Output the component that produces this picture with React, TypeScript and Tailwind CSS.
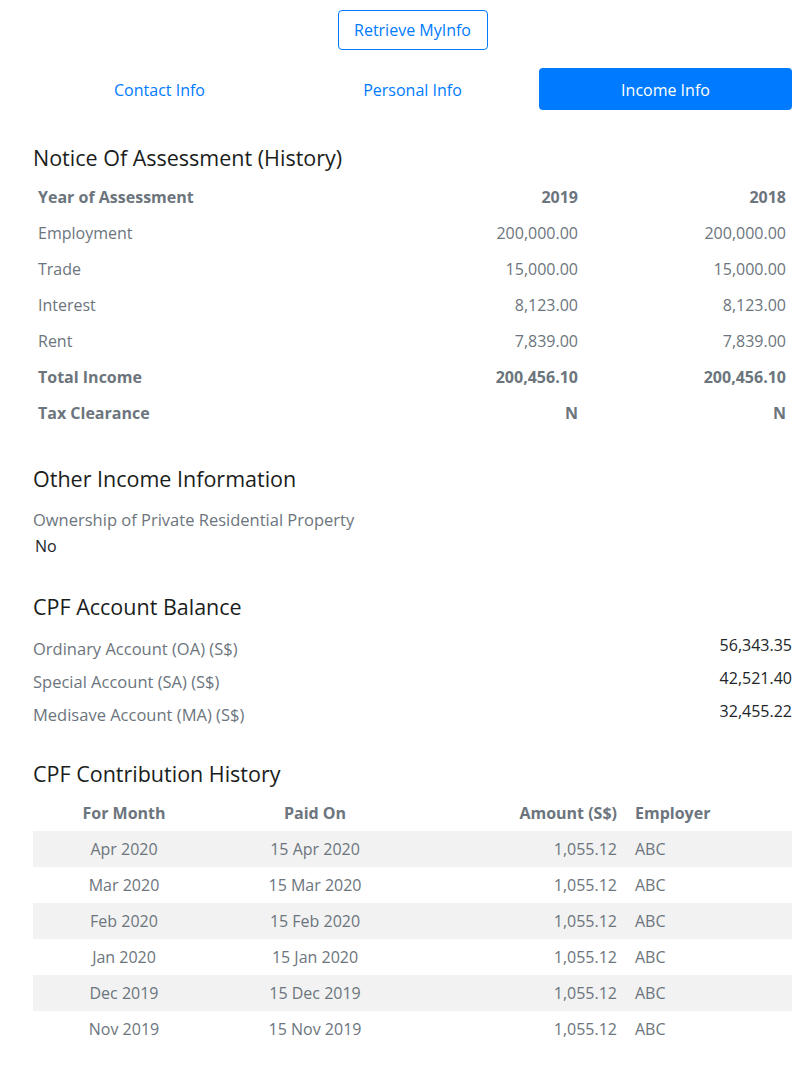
import React from "react";

const noa = [
  { label: "Employment", y2019: "200,000.00", y2018: "200,000.00" },
  { label: "Trade", y2019: "15,000.00", y2018: "15,000.00" },
  { label: "Interest", y2019: "8,123.00", y2018: "8,123.00" },
  { label: "Rent", y2019: "7,839.00", y2018: "7,839.00" },
];

const balances = [
  { label: "Ordinary Account (OA) (S$)", value: "56,343.35" },
  { label: "Special Account (SA) (S$)", value: "42,521.40" },
  { label: "Medisave Account (MA) (S$)", value: "32,455.22" },
];

const contributions = [
  { month: "Apr 2020", paid: "15 Apr 2020" },
  { month: "Mar 2020", paid: "15 Mar 2020" },
  { month: "Feb 2020", paid: "15 Feb 2020" },
  { month: "Jan 2020", paid: "15 Jan 2020" },
  { month: "Dec 2019", paid: "15 Dec 2019" },
  { month: "Nov 2019", paid: "15 Nov 2019" },
];

export default function App() {
  return (
    <div className="bg-white font-['Open_Sans',_'Noto_Sans',_sans-serif] text-[16px] text-[#212529]">
      <div className="pl-[33px] pr-[18px] pt-[10px] pb-[20px]">
        {/* Retrieve button */}
        <div className="flex justify-center">
          <button className="h-[40px] w-[150px] rounded-[4px] border border-[#007bff] text-[16px] text-[#007bff]">
            Retrieve MyInfo
          </button>
        </div>

        {/* Tabs */}
        <div className="mt-[18px] grid grid-cols-3">
          <div className="flex h-[42px] items-center justify-center pt-[2px] text-[#007bff]">Contact Info</div>
          <div className="flex h-[42px] items-center justify-center pt-[2px] text-[#007bff]">Personal Info</div>
          <div className="flex h-[42px] items-center justify-center rounded-[4px] bg-[#007bff] pt-[2px] text-white">
            Income Info
          </div>
        </div>

        {/* Notice of Assessment */}
        <h5 className="mt-[33px] text-[21.5px] leading-[30px] text-[#1a1d20]">Notice Of Assessment (History)</h5>
        <div className="mt-[6px] text-[#6c757d]">
          <div className="grid h-[36px] grid-cols-[1fr_208px_208px] items-center font-bold">
            <div className="pl-[5px]">Year of Assessment</div>
            <div className="pr-[6px] text-right">2019</div>
            <div className="pr-[6px] text-right">2018</div>
          </div>
          {noa.map((r) => (
            <div key={r.label} className="grid h-[36px] grid-cols-[1fr_208px_208px] items-center">
              <div className="pl-[5px]">{r.label}</div>
              <div className="pr-[6px] text-right">{r.y2019}</div>
              <div className="pr-[6px] text-right">{r.y2018}</div>
            </div>
          ))}
          <div className="grid h-[36px] grid-cols-[1fr_208px_208px] items-center font-bold">
            <div className="pl-[5px]">Total Income</div>
            <div className="pr-[6px] text-right">200,456.10</div>
            <div className="pr-[6px] text-right">200,456.10</div>
          </div>
          <div className="grid h-[36px] grid-cols-[1fr_208px_208px] items-center font-bold">
            <div className="pl-[5px]">Tax Clearance</div>
            <div className="pr-[6px] text-right">N</div>
            <div className="pr-[6px] text-right">N</div>
          </div>
        </div>

        {/* Other income */}
        <h5 className="mt-[33px] text-[21.5px] leading-[30px] text-[#1a1d20]">Other Income Information</h5>
        <div className="mt-[14px] text-[16.5px] leading-[24px] text-[#6c757d]">Ownership of Private Residential Property</div>
        <div className="mt-[2px] pl-[2px] leading-[24px]">No</div>

        {/* CPF balance */}
        <h5 className="mt-[34px] text-[21.5px] leading-[30px] text-[#1a1d20]">CPF Account Balance</h5>
        <div className="mt-[11px]">
          {balances.map((b) => (
            <div key={b.label} className="flex h-[33px] justify-between">
              <div className="pt-[4px] text-[16.5px] text-[#6c757d]">{b.label}</div>
              <div>{b.value}</div>
            </div>
          ))}
        </div>

        {/* CPF contribution history */}
        <h5 className="mt-[27px] text-[21.5px] leading-[30px] text-[#1a1d20]">CPF Contribution History</h5>
        <div className="mt-[6px] text-[#6c757d]">
          <div className="grid h-[36px] grid-cols-[182px_200px_1fr_167px] items-center font-bold">
            <div className="text-center">For Month</div>
            <div className="text-center">Paid On</div>
            <div className="pr-[8px] text-right">Amount (S$)</div>
            <div className="pl-[10px]">Employer</div>
          </div>
          {contributions.map((c, i) => (
            <div
              key={c.month}
              className={`grid h-[36px] grid-cols-[182px_200px_1fr_167px] items-center ${
                i % 2 === 0 ? "bg-[#f2f2f2]" : ""
              }`}
            >
              <div className="text-center">{c.month}</div>
              <div className="text-center">{c.paid}</div>
              <div className="pr-[8px] text-right">1,055.12</div>
              <div className="pl-[10px]">ABC</div>
            </div>
          ))}
        </div>
      </div>
    </div>
  );
}
